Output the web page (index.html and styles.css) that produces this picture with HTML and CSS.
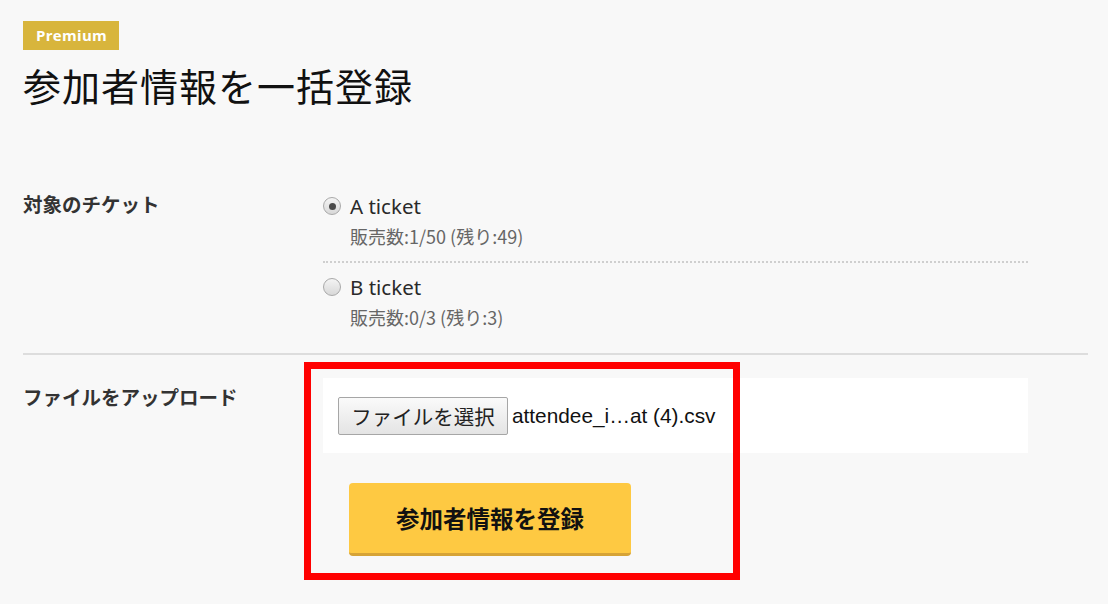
FILE: index.html
```html
<!DOCTYPE html>
<html lang="ja">
<head>
<meta charset="utf-8">
<link rel="stylesheet" href="styles.css">
</head>
<body>
<div class="page">
  <span class="badge">Premium</span>
  <h1 class="title">参加者情報を一括登録</h1>

  <div class="row row-tickets">
    <div class="label">対象のチケット</div>
    <div class="field">
      <div class="option">
        <div class="opt-line"><span class="radio checked"></span><span class="opt-name">A ticket</span></div>
        <div class="opt-sub">販売数:1/50 (残り:49)</div>
      </div>
      <div class="option option-b">
        <div class="opt-line"><span class="radio"></span><span class="opt-name">B ticket</span></div>
        <div class="opt-sub">販売数:0/3 (残り:3)</div>
      </div>
    </div>
  </div>

  <div class="row row-upload">
    <div class="label label-upload">ファイルをアップロード</div>
    <div class="field">
      <div class="file-box">
        <span class="file-btn">ファイルを選択</span><span class="file-name">attendee_i…at (4).csv</span>
      </div>
      <div class="submit-wrap">
        <span class="submit">参加者情報を登録</span>
      </div>
    </div>
    <div class="highlight"></div>
  </div>
</div>
</body>
</html>
```

FILE: styles.css
```css
* { box-sizing: border-box; }
html, body { margin: 0; padding: 0; }
body {
  background: #f8f8f8;
  font-family: "Noto Sans CJK JP", "Noto Sans", sans-serif;
  color: #222;
  width: 1108px;
  height: 604px;
  overflow: hidden;
}
.page {
  padding: 21px 20px 0 23px;
}
.badge {
  display: inline-block;
  background: #d8b53c;
  color: #fff;
  font-family: "Open Sans", "Noto Sans", sans-serif;
  font-weight: 700;
  font-size: 15px;
  letter-spacing: 0.3px;
  line-height: 29px;
  height: 29px;
  padding: 0 12px 0 13px;
}
.title {
  margin: 10px 0 0 0;
  font-weight: 400;
  font-size: 38px;
  line-height: 50px;
  color: #111;
  letter-spacing: 1px;
}
.row {
  display: grid;
  grid-template-columns: 300px 705px;
  width: 1065px;
}
.row-tickets {
  margin-top: 84px;
  padding-bottom: 25px;
  border-bottom: 2px solid #dddddd;
}
.label {
  font-weight: 700;
  font-size: 19.5px;
  line-height: 20px;
  color: #333;
}
.option {
  padding-bottom: 14px;
}
.option-b {
  border-top: 2px dotted #cfcfcf;
  padding-top: 12px;
  padding-bottom: 0;
}
.opt-line {
  display: flex;
  align-items: center;
  height: 24px;
}
.radio {
  width: 18px;
  height: 18px;
  border-radius: 50%;
  border: 1px solid #a9a9a9;
  background: linear-gradient(#f4f4f4, #d8d8d8);
  margin-right: 9px;
  position: relative;
  flex: none;
}
.radio.checked::after {
  content: "";
  position: absolute;
  left: 4.5px;
  top: 4.5px;
  width: 7px;
  height: 7px;
  border-radius: 50%;
  background: #4a4a4a;
}
.opt-name {
  font-family: "Noto Sans", "Noto Sans CJK JP", sans-serif;
  font-size: 20.5px;
  color: #2a2a2a;
}
.opt-sub {
  margin-top: 7px;
  margin-left: 27px;
  font-size: 18px;
  line-height: 22px;
  color: #666;
}
.row-upload {
  position: relative;
  padding-top: 23px;
}
.label-upload {
  padding-top: 9px;
}
.file-box {
  background: #fff;
  height: 75px;
  padding: 19px 15px;
  display: flex;
  align-items: center;
}
.file-btn {
  display: inline-flex;
  align-items: center;
  justify-content: center;
  width: 170px;
  height: 38px;
  border: 1px solid #a6a6a6;
  border-radius: 2px;
  background: linear-gradient(#fafafa, #e4e4e4);
  font-size: 20.5px;
  color: #222;
}
.file-name {
  margin-left: 4px;
  font-family: "Liberation Sans", Arial, sans-serif;
  font-size: 20.8px;
  color: #111;
}
.submit-wrap {
  padding: 30px 0 0 26px;
}
.submit {
  display: flex;
  align-items: center;
  justify-content: center;
  width: 282px;
  height: 73px;
  background: #fec942;
  border-bottom: 3px solid #d6a336;
  border-radius: 4px;
  font-weight: 700;
  font-size: 23.5px;
  color: #111;
}
.highlight {
  position: absolute;
  left: 281px;
  top: 7px;
  width: 436px;
  height: 218px;
  border: 7px solid #ff0000;
  pointer-events: none;
}
```
